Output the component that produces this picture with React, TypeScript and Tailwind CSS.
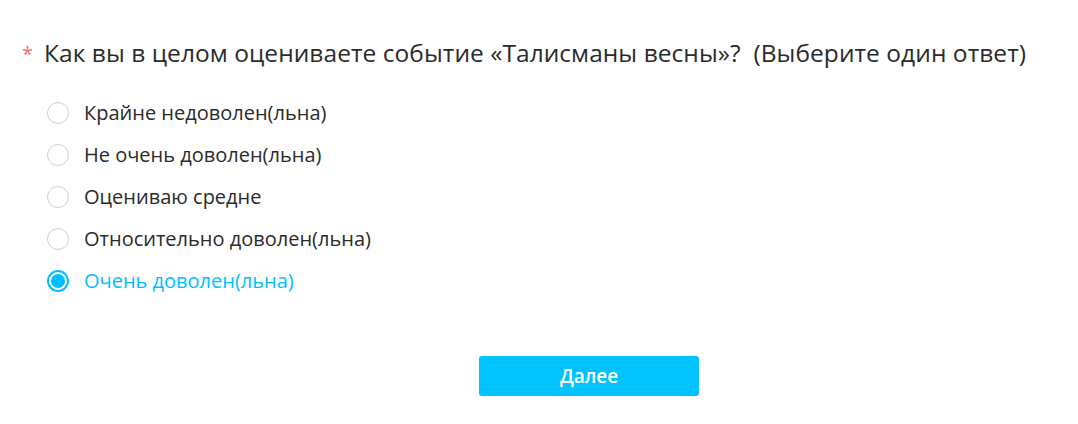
import { useState } from 'react'

const options = [
  'Крайне недоволен(льна)',
  'Не очень доволен(льна)',
  'Оцениваю средне',
  'Относительно доволен(льна)',
  'Очень доволен(льна)',
]

export default function App() {
  const [selected, setSelected] = useState(4)

  return (
    <div className="w-[1078px] h-[424px] bg-white text-[#333] font-['Open_Sans',sans-serif]">
      {/* Question */}
      <div className="flex items-center pt-[36px] pl-[22px] h-[70px]">
        <span className="text-[20px] leading-none text-[#f56c6c] w-[22px] mt-[2px]">*</span>
        <h2 className="text-[24.5px] leading-[34px] text-[#2b2b2b] tracking-[0.05px]">
          Как вы в целом оцениваете событие «Талисманы весны»?&nbsp;&nbsp;(Выберите один ответ)
        </h2>
      </div>

      {/* Options */}
      <div className="flex flex-col pl-[47px] mt-[22px]">
        {options.map((opt, i) => {
          const active = selected === i
          return (
            <label
              key={i}
              onClick={() => setSelected(i)}
              className="flex items-center h-[42px] cursor-pointer"
            >
              <span
                className={
                  active
                    ? 'w-[22px] h-[22px] rounded-full border-2 border-[#00bfff] flex items-center justify-center'
                    : 'w-[22px] h-[22px] rounded-full border border-[#d0d0d0]'
                }
              >
                {active && <span className="w-[14px] h-[14px] rounded-full bg-[#00bfff]" />}
              </span>
              <span
                className={
                  active
                    ? 'ml-[15px] text-[20px] text-[#00bfff]'
                    : 'ml-[15px] text-[20px] text-[#2b2b2b]'
                }
              >
                {opt}
              </span>
            </label>
          )
        })}
      </div>

      {/* Next */}
      <div className="pl-[479px] mt-[54px]">
        <button className="w-[220px] h-[40px] bg-[#00c3ff] rounded-[3px] text-white text-[19px] font-semibold">
          Далее
        </button>
      </div>
    </div>
  )
}
